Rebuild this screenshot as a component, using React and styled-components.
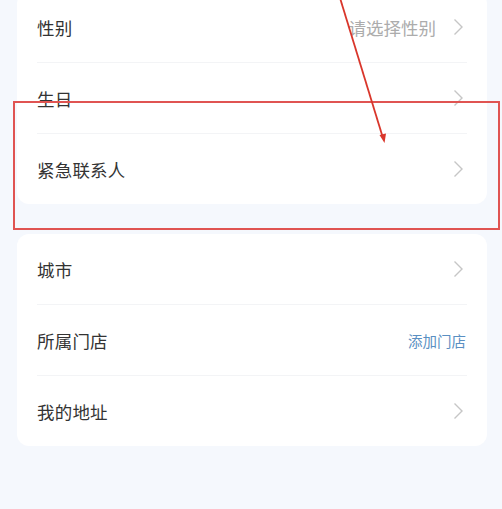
import styled, { createGlobalStyle } from "styled-components";

const Global = createGlobalStyle`
  html, body {
    margin: 0;
    padding: 0;
    background: #f5f8fd;
  }
  body {
    font-family: "Noto Sans CJK SC", "Noto Sans", sans-serif;
    overflow: hidden;
  }
`;

const Page = styled.div`
  position: relative;
  width: 502px;
  height: 509px;
  overflow: hidden;
  padding: 0 15px 0 17px;
  box-sizing: border-box;
  display: flex;
  flex-direction: column;
  gap: 30px;
`;

const Card = styled.section`
  background: #fff;
  border-radius: 12px;
  padding: 0 20px;
  margin-top: ${({ $offset }) => $offset || 0}px;
  display: flex;
  flex-direction: column;
`;

const Row = styled.div`
  height: 70px;
  display: flex;
  align-items: center;
  justify-content: space-between;
  border-top: ${({ $first }) => ($first ? "none" : "1px solid #f3f4f6")};
`;

const Label = styled.span`
  font-size: 17.5px;
  color: #333;
  letter-spacing: 0.2px;
`;

const Right = styled.div`
  display: flex;
  align-items: center;
  gap: 17px;
  margin-right: 3px;
`;

const Hint = styled.span`
  font-size: 17.5px;
  color: #acacac;
`;

const Link = styled.span`
  font-size: 14.5px;
  color: #5a8fc2;
  margin-right: -2px;
`;

const Overlay = styled.div`
  position: absolute;
  left: 13px;
  top: 101px;
  width: 487px;
  height: 129px;
  box-sizing: border-box;
  border: 2px solid #e05452;
  pointer-events: none;
`;

const Arrow = styled.svg`
  position: absolute;
  left: 0;
  top: 0;
  pointer-events: none;
`;

function Chevron() {
  return (
    <svg width="11" height="18" viewBox="0 0 11 18">
      <path d="M1.5 1.5 L9 9 L1.5 16.5" fill="none" stroke="#c6c6c6" strokeWidth="1.4" />
    </svg>
  );
}

function Item({ label, hint, link, first }) {
  return (
    <Row $first={first}>
      <Label>{label}</Label>
      <Right>
        {hint && <Hint>{hint}</Hint>}
        {link ? <Link>{link}</Link> : <Chevron />}
      </Right>
    </Row>
  );
}

export default function App() {
  return (
    <>
      <Global />
      <Page>
        <Card $offset={-8}>
          <Item first label="性别" hint="请选择性别" />
          <Item label="生日" />
          <Item label="紧急联系人" />
        </Card>
        <Card>
          <Item first label="城市" />
          <Item label="所属门店" link="添加门店" />
          <Item label="我的地址" />
        </Card>
        <Overlay />
        <Arrow width="502" height="509" viewBox="0 0 502 509">
          <line x1="340" y1="-2" x2="383" y2="138" stroke="#d9362b" strokeWidth="1.8" />
          <path d="M379.5 135 L384.5 143 L386 133.5 Z" fill="#d9362b" />
        </Arrow>
      </Page>
    </>
  );
}
